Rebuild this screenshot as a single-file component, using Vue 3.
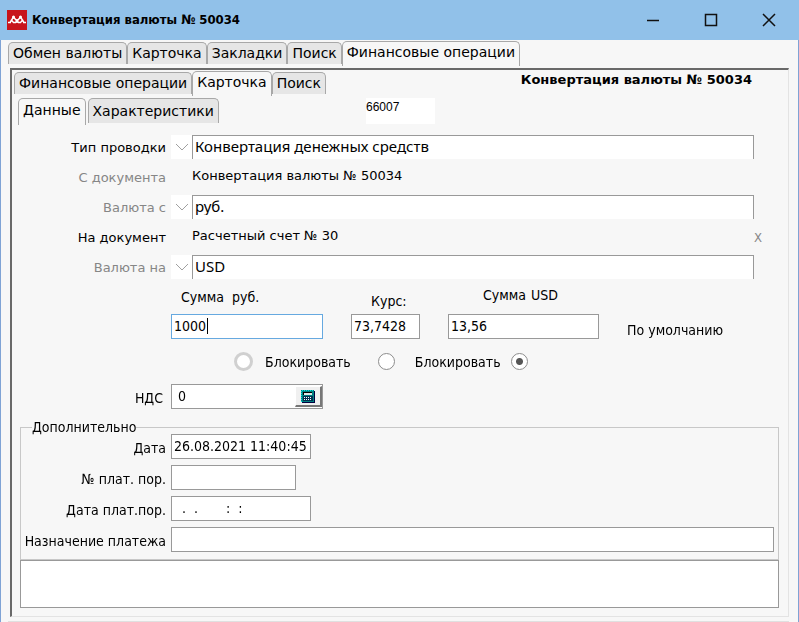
<script setup>
import { computed, ref } from 'vue'

const title = 'Конвертация валюты № 50034'
const mainTabs = ['Обмен валюты', 'Карточка', 'Закладки', 'Поиск', 'Финансовые операции']
const innerTabs = ['Финансовые операции', 'Карточка', 'Поиск']
const cardTabs = ['Данные', 'Характеристики']
const mainTab = ref(4)
const innerTab = ref(1)
const cardTab = ref(0)

const entryType = ref('Конвертация денежных средств')
const currencyFrom = ref('руб.')
const currencyTo = ref('USD')
const amountFrom = ref('1000')
const rate = ref('73,7428')
const amountTo = ref('13,56')
const locked = ref('amountTo')
const vat = ref('0')
const date = ref('26.08.2021 11:40:45')
const orderNo = ref('')
const orderDate = ref('  .  .       :  :')
const purpose = ref('')
const notes = ref('')

// Digits are 8px wide, so the insertion bar follows the typed amount.
const caretX = computed(() => `${3 + amountFrom.value.length * 8}px`)
const vFocus = { mounted: (el) => { el.focus(); el.setSelectionRange(el.value.length, el.value.length) } }
</script>

<template>
  <div class="window">
    <header class="titlebar">
      <svg class="logo" viewBox="0 0 20 20" aria-hidden="true">
        <rect width="20" height="20" fill="#c8141b" />
        <path d="M1 12.500h3M16 12.500h3M3 12.500L6.500 7l4.500 5.500M9 12.500L13.500 7l3.500 5.500M4 9.500l2.500 3h2L10 10l1.500 2.500h2l2.500-3" fill="none" stroke="#fff" stroke-width="1.400" />
        <circle cx="6.500" cy="7" r="1.500" fill="#fff" /><circle cx="13.500" cy="7" r="1.500" fill="#fff" />
      </svg>
      <h1>{{ title }}</h1>
      <div class="win-buttons">
        <button type="button" aria-label="Свернуть"><svg viewBox="0 0 14 14"><path d="M1 7.500h12" /></svg></button>
        <button type="button" aria-label="Развернуть"><svg viewBox="0 0 14 14"><path d="M1.500 1.500h11v11h-11z" /></svg></button>
        <button type="button" aria-label="Закрыть"><svg viewBox="0 0 14 14"><path d="M1 1l12 12M13 1L1 13" /></svg></button>
      </div>
    </header>

    <div class="client">
      <nav class="tabs main-tabs">
        <button v-for="(t, i) in mainTabs" :key="t" type="button" :class="{ active: i === mainTab }" @click="mainTab = i">{{ t }}</button>
      </nav>

      <main class="panel">
        <div class="panel-head">
          <nav class="tabs">
            <button v-for="(t, i) in innerTabs" :key="t" type="button" :class="{ active: i === innerTab }" @click="innerTab = i">{{ t }}</button>
          </nav>
          <h2>{{ title }}</h2>
        </div>

        <div class="card-head">
          <nav class="tabs card-tabs">
            <button v-for="(t, i) in cardTabs" :key="t" type="button" :class="{ active: i === cardTab }" @click="cardTab = i">{{ t }}</button>
          </nav>
          <output class="code">66007</output>
        </div>

        <form class="form" @submit.prevent>
          <div class="row">
            <label for="type">Тип проводки</label>
            <div class="combo">
              <button type="button" aria-label="Выбрать тип"><svg viewBox="0 0 14 8"><path d="M1 1l6 6 6-6" /></svg></button>
              <input id="type" v-model="entryType" type="text">
            </div>
          </div>
          <div class="row">
            <span class="caption muted">С документа</span>
            <span class="value">Конвертация валюты № 50034</span>
          </div>
          <div class="row">
            <label for="from" class="muted">Валюта с</label>
            <div class="combo">
              <button type="button" aria-label="Выбрать валюту"><svg viewBox="0 0 14 8"><path d="M1 1l6 6 6-6" /></svg></button>
              <input id="from" v-model="currencyFrom" type="text">
            </div>
          </div>
          <div class="row">
            <span class="caption">На документ</span>
            <span class="value">Расчетный счет № 30</span>
            <button type="button" class="clear">X</button>
          </div>
          <div class="row">
            <label for="to" class="muted">Валюта на</label>
            <div class="combo">
              <button type="button" aria-label="Выбрать валюту"><svg viewBox="0 0 14 8"><path d="M1 1l6 6 6-6" /></svg></button>
              <input id="to" v-model="currencyTo" type="text">
            </div>
          </div>

          <div class="amounts">
            <label for="a1" class="a1"><span>Сумма</span><span>руб.</span></label>
            <label for="rate" class="a2">Курс:</label>
            <label for="a3" class="a3"><span>Сумма</span><span>USD</span></label>
            <span></span>
            <input id="a1" v-model="amountFrom" v-focus type="text" class="field typed" :style="{ '--caret-x': caretX }">
            <input id="rate" v-model="rate" type="text" class="field">
            <input id="a3" v-model="amountTo" type="text" class="field">
            <span class="default">По умолчанию</span>
          </div>

          <div class="locks">
            <input v-model="locked" type="radio" name="lock" value="amountFrom" class="wide" aria-label="Сумма руб.">
            <label>Блокировать <input v-model="locked" type="radio" name="lock" value="rate"></label>
            <label>Блокировать <input v-model="locked" type="radio" name="lock" value="amountTo"></label>
          </div>

          <div class="line vat">
            <label for="vat">НДС</label>
            <div class="field calc">
              <input id="vat" v-model="vat" type="text">
              <button type="button" aria-label="Калькулятор">
                <svg viewBox="0 0 14 13" shape-rendering="crispEdges">
                  <rect width="13" height="12" fill="#008080" />
                  <path d="M13 1h1v12H1v-1h12z" fill="#000040" />
                  <path d="M1 .5h12M.5 1v11" fill="none" stroke="#00e0e0" stroke-dasharray="1 1" />
                  <rect x="2" y="2" width="9" height="3" fill="#000" />
                  <rect x="3" y="3" width="8" height="2" fill="#dfe8e8" />
                  <rect x="2" y="6" width="10" height="5" fill="#003050" />
                  <path d="M3 7.500h8M3 9.500h8" stroke="#fff" stroke-dasharray="1 1" />
                </svg>
              </button>
            </div>
          </div>

          <fieldset>
            <legend>Дополнительно</legend>
            <div class="line"><label for="date">Дата</label><input id="date" v-model="date" type="text" class="field w140"></div>
            <div class="line"><label for="no">№ плат. пор.</label><input id="no" v-model="orderNo" type="text" class="field w125"></div>
            <div class="line"><label for="odate">Дата плат.пор.</label><input id="odate" v-model="orderDate" type="text" class="field w140"></div>
            <div class="line"><label for="purpose">Назначение платежа</label><input id="purpose" v-model="purpose" type="text" class="field grow"></div>
          </fieldset>
          <textarea v-model="notes" aria-label="Примечание"></textarea>
        </form>
      </main>
    </div>
  </div>
</template>

<style>
body { margin: 0; }
</style>

<style scoped>
* { box-sizing: border-box; }
.window {
  display: flex;
  flex-direction: column;
  min-height: 100vh;
  background: #f7f7f7;
  color: #000;
  font: 14px/16px "DejaVu Sans Condensed", "DejaVu Sans", sans-serif;
}
button, input, textarea { font: inherit; color: inherit; margin: 0; padding: 0; border: 0; border-radius: 0; background: none; outline: 0; }
h1, h2 { margin: 0; font-weight: bold; }
svg { display: block; }

.titlebar { display: flex; align-items: center; height: 40px; padding-left: 7px; background: #91c1e9; }
.logo { width: 20px; height: 20px; }
h1 { flex: 1; padding-left: 5px; font-size: 13px; }
.win-buttons { display: flex; padding-right: 1px; }
.win-buttons button { display: grid; place-items: center; width: 58px; height: 40px; }
.win-buttons svg { width: 14px; height: 14px; fill: none; stroke: #111; stroke-width: 1.500; }

.client { flex: 1; display: flex; flex-direction: column; padding: 1px 9px 0 7px; border: solid #7fa3d5; border-width: 0 1px; }
.client::after { content: ""; height: 1px; margin-top: 4px; background: #e0e0e0; }

.tabs { display: flex; align-items: flex-start; font: 14px/18px "DejaVu Sans", sans-serif; }
.tabs button { height: 22px; margin-top: 1px; padding: 0 4px 2px; border: solid #a8a8a8; border-width: 1px 1px 0; border-radius: 5px 5px 0 0; background: #e6e6e6; white-space: nowrap; }
.tabs button.active { height: 25px; margin-top: 0; padding-bottom: 4px; background: #f7f7f7; }

.panel { flex: 1; display: flex; flex-direction: column; margin: 2px 0 0 2px; padding: 1px 9px 8px 8px; border: solid; border-color: #696969 #e3e3e3 #e3e3e3 #696969; border-width: 2px 1px 1px 2px; }
.panel-head { display: flex; justify-content: space-between; height: 27px; margin-left: -6px; }
h2 { padding-right: 27px; font: bold 13px/18px "DejaVu Sans", sans-serif; }
.card-head { display: flex; height: 34px; }
.card-tabs { width: 348px; margin-left: -2px; gap: 2px; }
.tabs.card-tabs button { height: 25px; margin-top: 0; padding-bottom: 0; }
.tabs.card-tabs button.active { height: 27px; padding-bottom: 4px; }
.code { width: 69px; height: 26px; background: #fff; font: 12px/18px "Liberation Sans", sans-serif; }

.form { flex: 1; display: flex; flex-direction: column; }
.row { display: flex; align-items: center; height: 30px; padding-right: 25px; font: 13px/16px "DejaVu Sans", sans-serif; }
.row > label, .caption { width: 146px; padding-top: 2px; text-align: right; }
.muted { color: #868686; }
.combo { flex: 1; display: flex; height: 24px; margin-left: 5px; }
.combo button { display: grid; place-items: center; width: 21px; background: #fff; }
.combo svg { width: 14px; height: 8px; fill: none; stroke: #a0a0a0; }
.combo input { flex: 1; min-width: 0; padding: 0 2px 4px; border: solid #999; border-width: 1px 1px 0; background: #fff; font: 15px/18px "Noto Sans", sans-serif; }
.value { flex: 1; margin-left: 26px; padding-bottom: 2px; }
.clear { width: 8px; margin-right: -8px; padding-top: 2px; color: #888; font-family: "DejaVu Sans Condensed", sans-serif; }

.field { height: 25px; padding: 0 2px 2px; border: 1px solid #999; background: #fff; }
.amounts { display: grid; grid-template-columns: 152px 69px 151px 1fr; grid-template-rows: 32px 25px; column-gap: 28px; padding-left: 151px; }
.amounts label { display: flex; align-items: center; gap: 8px; }
.amounts .a1 { padding: 0 0 3px 10px; }
.amounts .a2 { padding: 5px 0 0 20px; }
.amounts .a3 { padding: 0 0 7px 35px; gap: 5px; }
.field:focus { border-color: #66a9e0; }
.typed:focus { caret-color: transparent; background: #fff linear-gradient(#000, #000) no-repeat var(--caret-x) 3px / 1px 16px; }
.default { align-self: end; line-height: 18px; }

.locks { display: flex; align-items: center; height: 45px; padding-left: 214px; }
.locks label { display: flex; align-items: center; }
input[type="radio"] { appearance: none; width: 17px; height: 17px; border: 1px solid #8c8c8c; border-radius: 50%; background: #fff; }
.locks .wide { width: 19px; height: 19px; border: 3px solid #d0d0d0; }
.locks label { margin-left: 12px; }
.locks label input { margin-left: 27px; }
.locks label + label { margin-left: 20px; }
.locks label + label input { margin-left: 10px; }
input[type="radio"]:checked { background: radial-gradient(circle, #555 3px, #fff 4px); }

.line { display: flex; align-items: center; }
.line label { width: 146px; margin-right: 5px; text-align: right; }
.vat label { padding: 2px 3px 0 0; }
.calc { display: flex; width: 152px; padding: 1px 0; }
.calc input { flex: 1; min-width: 0; padding: 0 0 2px 6px; }
.calc button { display: grid; place-items: center; width: 27px; background: #f0f0f0; border: solid; border-width: 1px 2px 2px 1px; border-color: #fff #777 #777 #fff; }
.calc svg { width: 14px; height: 13px; }

fieldset { display: flex; flex-direction: column; gap: 6px; min-width: 0; margin: 11px 0 0; padding: 0 4px 7px 0; border: 1px solid #c8c8c8; }
legend { height: 14px; margin-left: 11px; padding: 0; line-height: 14px; }
fieldset .line label { width: 145px; padding-top: 2px; }
.w140 { width: 140px; }
.w125 { width: 125px; }
.grow { flex: 1; min-width: 0; }
textarea { flex: 1; min-height: 47px; border: 1px solid #999; background: #fff; resize: none; }
</style>
